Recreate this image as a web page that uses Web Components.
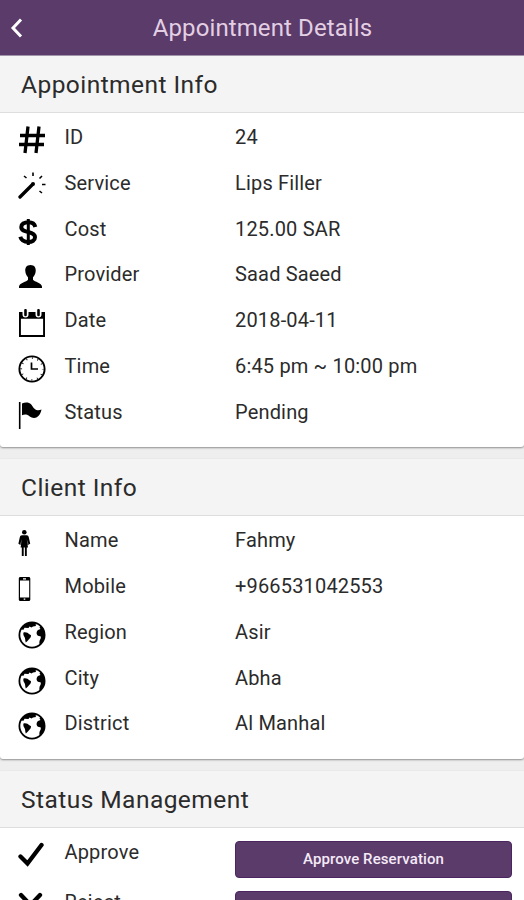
<!DOCTYPE html>
<html lang="en">
<head>
<meta charset="utf-8">
<title>Appointment Details</title>
<style>
    :root {
        --primary: #5a3b69;
        --primary-edge: #4b2460;
        --page-bg: #eeeeee;
        --section-bg: #f4f4f4;
        --text-color: #2b2b2b;
    }
    body {
        margin: 0;
        height: 900px;
        overflow: hidden;
        background: var(--page-bg);
        color: var(--text-color);
        font-family: Roboto, "Liberation Sans", sans-serif;
    }
</style>
</head>
<body>
<app-bar>Appointment Details</app-bar>
<main>
    <info-card>
        <span slot="title">Appointment Info</span>
        <info-row icon="hash" label="ID">24</info-row>
        <info-row icon="wand" label="Service">Lips Filler</info-row>
        <info-row icon="dollar" label="Cost">125.00 SAR</info-row>
        <info-row icon="user" label="Provider">Saad Saeed</info-row>
        <info-row icon="calendar" label="Date">2018-04-11</info-row>
        <info-row icon="clock" label="Time">6:45 pm ~ 10:00 pm</info-row>
        <info-row icon="flag" label="Status">Pending</info-row>
    </info-card>
    <info-card>
        <span slot="title">Client Info</span>
        <info-row icon="woman" label="Name">Fahmy</info-row>
        <info-row icon="phone" label="Mobile">+966531042553</info-row>
        <info-row icon="globe" label="Region">Asir</info-row>
        <info-row icon="globe" label="City">Abha</info-row>
        <info-row icon="globe" label="District">Al Manhal</info-row>
    </info-card>
    <info-card>
        <span slot="title">Status Management</span>
        <info-row class="action" icon="check" label="Approve"><action-button>Approve Reservation</action-button></info-row>
        <info-row class="action" icon="cross" label="Reject"><action-button></action-button></info-row>
    </info-card>
</main>

<script>
const icons = {
    hash: '<path d="M10 .5 7 27M21 .5l-3 26.500M2 9.500h25M1 18.500h25" fill="none" stroke="currentColor" stroke-width="3.300"/>',
    wand: '<path d="M2 25 14 13" fill="none" stroke="currentColor" stroke-width="3.300" stroke-linecap="round"/><circle cx="15" cy="12" r="2"/><path d="M15 .5v3.500M6 4l2.500 2M24 4l-2.500 2.500M24 12.500h3.500M21.500 19l2.500 2" fill="none" stroke="currentColor" stroke-width="1.600"/>',
    dollar: '<path d="M17.300 9C16.500 5.500 14 4.300 10.500 4.300 6 4.300 3.300 6 3.300 9c0 3.500 3.200 4.200 7 5 4 .9 6.700 1.900 6.700 5.300 0 3-2.800 4.700-6.700 4.700-4.500 0-7-1.700-8-5.200" fill="none" stroke="currentColor" stroke-width="4"/><path d="M10.300 1v26" fill="none" stroke="currentColor" stroke-width="3"/>',
    user: '<path d="M12.500 2c-4 0-5.500 2.800-5.200 6 .2 2.700 1.200 4.800 2.700 6.300v2.500C8.500 19 2 19.500 1 23.500V25h23v-1.500c-1-4-7.300-4.500-9-6.700v-2.500c1.500-1.500 2.500-3.600 2.700-6.300.3-3.200-1.200-6-5.200-6z"/>',
    calendar: '<path fill-rule="evenodd" d="M1 3h3.500v2.500a3 3 0 0 0 6 0V3h7v2.500a3 3 0 0 0 6 0V3H27v25H1zM2.900 9.800v16.300h22.200V9.800z"/><path d="M7.500 1.200V6M20.500 1.200V6" fill="none" stroke="currentColor" stroke-width="2.600" stroke-linecap="round"/>',
    clock: '<circle cx="14" cy="14" r="12.600" fill="none" stroke="currentColor" stroke-width="1.900"/><circle cx="14" cy="14" r="10.800" fill="none" stroke="currentColor" stroke-width="1.800" stroke-dasharray=".8 4.855" stroke-dashoffset=".4"/><path d="M13.500 7.500V14H20" fill="none" stroke="currentColor" stroke-width="1.700"/>',
    flag: '<path d="M1.700 1v27" fill="none" stroke="currentColor" stroke-width="1.600"/><path d="M4 2.500c3-1.500 7-1.500 9 .8 1.700 2 3.500 5.700 6.500 6 1.500.2 3-.3 4-.8-.7 4-3.200 8.500-7.500 8.500-3.500 0-5-3-8-3.500-1.500-.2-3 .3-4 .8z"/>',
    woman: '<circle cx="6.300" cy="3.200" r="2.300"/><path d="M4 6.300h4.600c1.300 0 1.900.8 2.200 2l1.400 6.500-1.500.8-2-5.500 1.300 8.400H8.800V27H6.900v-8.500h-1.200V27H3.800v-8.500H2.600l1.300-8.400-2 5.500-1.500-.8 1.400-6.500c.3-1.200.9-2 2.200-2z"/><path d="M2 9.500h8.600l.4 6.500H1.600z" opacity=".55"/>',
    phone: '<path fill-rule="evenodd" d="M2.300 2h8.500c.9 0 1.500.7 1.500 1.500v21c0 .9-.6 1.500-1.500 1.500H2.300C1.400 26 .8 25.400.8 24.500v-21C.8 2.700 1.400 2 2.300 2zM2 5.500v17h9.200v-17z"/><path d="M5 3.800h3M5.700 24.200h1.600" stroke="#fff" stroke-width="1.200"/>',
    globe: '<circle cx="14" cy="14" r="12.600" fill="none" stroke="currentColor" stroke-width="1.800"/><path d="M3 8.500C6 3 10 1.500 14 1.500c2.500 0 4.500.5 6 1.500l-2.500.5.5 1.500-3 .5-1.500 1-2-1-1 1.500-4-.2-1 2z"/><path d="M5.500 11.500c1.500-.7 3 0 4.500.5.500 1.300 2.200 1.500 3 2.300.2 2-1.200 3-2 4-1 1.300-2 2.300-3.200 3.200-.8-2-.3-4-1.300-5.500-1-1.300-1.500-3-1-4.500z"/><path d="M20 9c-1 1-1.700 2.500-1.300 4 .5 1.700 2 2.300 3.800 2.200.7 1 .2 2.500-.5 3.500-.6 1-.5 2-.7 3.300 0 1 .7 1.500 1.500 1 3-3 4.200-6 4-10C26.500 9 24.500 6.500 22.500 5l-1 1.500 1 1.500z"/>',
    check: '<path d="M2.500 15.500 9.500 22.500 23.500 4" fill="none" stroke="currentColor" stroke-width="4.300" stroke-linecap="round"/>',
    cross: '<path d="M3 4l19 20M22 4 3 24" fill="none" stroke="currentColor" stroke-width="4.300" stroke-linecap="round"/>'
};

customElements.define('app-bar', class extends HTMLElement {
    connectedCallback() {
        this.attachShadow({ mode: "open" });
        this.shadowRoot.innerHTML = `
            <style>
                :host {
                    display: grid;
                    grid-template-columns: 34px 1fr 33px;
                    align-items: center;
                    height: 55px;
                    border-bottom: 1px solid #a596ac;
                    background: var(--primary);
                    color: #e3cfe4;
                }
                svg {
                    display: block;
                    margin-left: 9px;
                }
                h1 {
                    margin: 0;
                    text-align: center;
                    font-size: 24px;
                    font-weight: 400;
                    letter-spacing: .1px;
                }
            </style>
            <svg width="16" height="22" viewBox="0 0 16 22"><path d="M12 2.500 4 11l8 8.500" fill="none" stroke="#fff" stroke-width="3"/></svg>
            <h1><slot></slot></h1>
        `
    }
})

customElements.define('info-card', class extends HTMLElement {
    connectedCallback() {
        this.attachShadow({ mode: "open" });
        this.shadowRoot.innerHTML = `
            <style>
                :host {
                    display: block;
                    margin-bottom: 12px;
                    background: #fff;
                    border-radius: 0 0 3px 3px;
                    box-shadow: 0 1px 2px rgba(0, 0, 0, .4);
                }
                header {
                    box-sizing: border-box;
                    height: 57px;
                    padding: 0 21px;
                    line-height: 57px;
                    font-size: 24.500px;
                    letter-spacing: .45px;
                    background: var(--section-bg);
                    border-bottom: 1px solid #dedede;
                }
                .rows {
                    padding: 2px 12px 11.600px 18px;
                }
            </style>
            <header><slot name="title"></slot></header>
            <div class="rows"><slot></slot></div>
        `
    }
})

customElements.define('info-row', class extends HTMLElement {
    connectedCallback() {
        this.attachShadow({ mode: "open" });
        this.shadowRoot.innerHTML = `
            <style>
                :host {
                    display: grid;
                    grid-template-columns: 46.500px 170.500px 1fr;
                    height: 45.800px;
                    line-height: 44.500px;
                    font-size: 20px;
                    letter-spacing: .17px;
                }
                :host(.action) {
                    height: 50.500px;
                }
                svg {
                    display: block;
                    margin-top: 11px;
                    color: #000;
                }
                .value {
                    white-space: nowrap;
                }
            </style>
            <svg width="28" height="29" viewBox="0 0 28 29" fill="currentColor">${icons[this.getAttribute('icon')]}</svg>
            <div>${this.getAttribute('label')}</div>
            <div class="value"><slot></slot></div>
        `
    }
})

customElements.define('action-button', class extends HTMLElement {
    connectedCallback() {
        this.attachShadow({ mode: "open" });
        this.shadowRoot.innerHTML = `
            <style>
                :host {
                    display: block;
                    padding-top: 11px;
                }
                button {
                    display: block;
                    box-sizing: border-box;
                    width: 100%;
                    height: 37px;
                    padding: 0;
                    border: 1px solid var(--primary-edge);
                    border-radius: 4px;
                    background: var(--primary);
                    color: #f5eaf8;
                    font: 500 15px Roboto, sans-serif;
                    letter-spacing: .1px;
                }
            </style>
            <button><slot></slot></button>
        `
    }
})
</script>
</body>
</html>
